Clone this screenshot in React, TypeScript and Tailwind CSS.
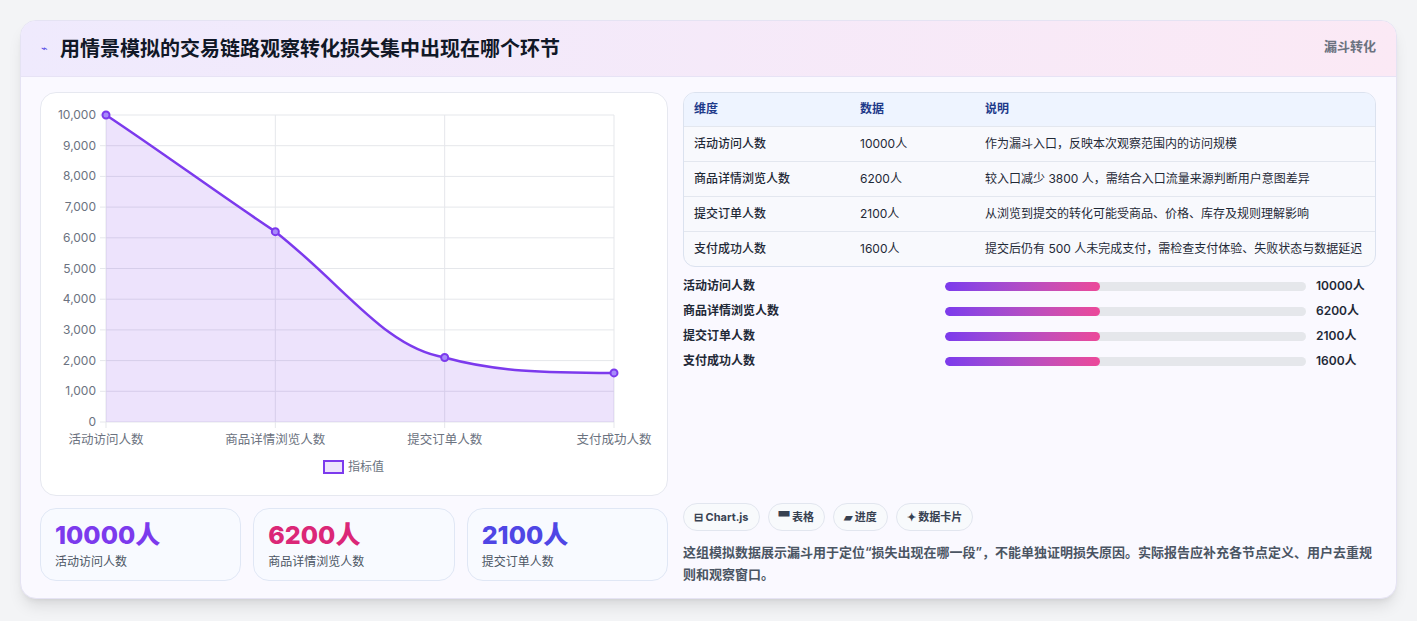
import React from 'react';

const rows = [
  { name: '活动访问人数', value: 10000, note: '作为漏斗入口，反映本次观察范围内的访问规模' },
  { name: '商品详情浏览人数', value: 6200, note: '较入口减少 3800 人，需结合入口流量来源判断用户意图差异' },
  { name: '提交订单人数', value: 2100, note: '从浏览到提交的转化可能受商品、价格、库存及规则理解影响' },
  { name: '支付成功人数', value: 1600, note: '提交后仍有 500 人未完成支付，需检查支付体验、失败状态与数据延迟' },
];

const font = { fontFamily: 'Inter, "Noto Sans CJK SC", sans-serif' };

function Chart() {
  // plot area in svg coords (card origin at 40,93)
  const L = 65, R = 573, T = 22, B = 329;
  const xs = [L, L + (R - L) / 3, L + (2 * (R - L)) / 3, R];
  const y = (v: number) => B - ((B - T) * v) / 10000;
  const pts = rows.map((r, i) => [xs[i], y(r.value)]);
  const line = `M${pts[0][0]},${pts[0][1]} C${pts[0][0] + 60},${pts[0][1] + 40} ${pts[1][0] - 60},${pts[1][1] - 40} ${pts[1][0]},${pts[1][1]} C${pts[1][0] + 70},${pts[1][1] + 55} ${pts[2][0] - 60},${pts[2][1] - 10} ${pts[2][0]},${pts[2][1]} C${pts[2][0] + 50},${pts[2][1] + 14} ${pts[3][0] - 70},${pts[3][1]} ${pts[3][0]},${pts[3][1]}`;
  const ticks = Array.from({ length: 11 }, (_, i) => i * 1000);
  const labels = ['活动访问人数', '商品详情浏览人数', '提交订单人数', '支付成功人数'];
  return (
    <svg width="627" height="403" className="block" style={font}>
      {ticks.map((t) => (
        <g key={t}>
          <line x1={L - 6} x2={R} y1={y(t)} y2={y(t)} stroke="#e5e7eb" />
          <text x={L - 10} y={y(t) + 4} textAnchor="end" fontSize="12" fill="#6b7280">
            {t.toLocaleString('en-US')}
          </text>
        </g>
      ))}
      {xs.map((x, i) => (
        <g key={i}>
          <line x1={x} x2={x} y1={T} y2={B + 6} stroke="#e5e7eb" />
          <text x={x} y={B + 22} textAnchor="middle" fontSize="12.5" fill="#6b7280">{labels[i]}</text>
        </g>
      ))}
      <path d={`${line} L${R},${B} L${L},${B} Z`} fill="rgba(124,58,237,0.14)" />
      <path d={line} fill="none" stroke="#7c3aed" strokeWidth="2.5" />
      {pts.map(([px, py], i) => (
        <circle key={i} cx={px} cy={py} r="3.5" fill="#a78bfa" stroke="#7c3aed" strokeWidth="2" />
      ))}
      <rect x="283" y="368" width="19" height="12" fill="rgba(124,58,237,0.14)" stroke="#7c3aed" strokeWidth="2" />
      <text x="307" y="378" fontSize="12" fill="#6b7280">指标值</text>
    </svg>
  );
}

export default function App() {
  const kpis = [
    { v: '10000人', l: '活动访问人数', c: 'text-[#7c3aed]' },
    { v: '6200人', l: '商品详情浏览人数', c: 'text-[#db2777]' },
    { v: '2100人', l: '提交订单人数', c: 'text-[#4f46e5]' },
  ];
  return (
    <div className="w-[1417px] h-[621px] bg-[#f3f4f6] px-5 pt-5" style={font}>
      <div className="w-[1377px] h-[579px] rounded-2xl bg-[#faf9ff] border border-[#e5e3f3] shadow-lg overflow-hidden flex flex-col">
        <div className="h-[56px] flex justify-between px-5 bg-gradient-to-r from-[#efeafd] to-[#fbe9f5] border-b border-[#e7e3f5]">
          <div className="flex items-center gap-3">
            <span className="text-[11px] text-[#4f46e5]">⌁</span>
            <h1 className="text-[20px] font-bold text-[#111827]">用情景模拟的交易链路观察转化损失集中出现在哪个环节</h1>
          </div>
          <div className="pt-4 text-[13px] font-semibold text-[#6b7280]">漏斗转化</div>
        </div>
        <div className="flex gap-[15px] pl-[19px] pr-5 pt-[15px]">
          <div className="w-[628px] flex flex-col gap-3">
            <div className="h-[404px] bg-white rounded-2xl border border-[#e6e8f0]">
              <Chart />
            </div>
            <div className="grid grid-cols-3 gap-3">
              {kpis.map((k) => (
                <div key={k.l} className="h-[73px] rounded-2xl border border-[#e0e7f5] bg-[#f8faff] px-3.5 pt-2.5">
                  <div className={`text-[25px] font-extrabold leading-8 ${k.c}`}>{k.v}</div>
                  <div className="text-[12px] text-[#4b5563] mt-0.5">{k.l}</div>
                </div>
              ))}
            </div>
          </div>
          <div className="flex-1 flex flex-col">
            <div className="rounded-xl border border-[#dbe2ef] overflow-hidden bg-[#f8f9fd]">
              <table className="w-full text-[12px] text-[#1f2937]">
                <thead>
                  <tr className="bg-[#eef4ff] text-[#1e3a8a] h-[33px] text-left">
                    <th className="font-semibold pl-2.5 w-[176px]">维度</th>
                    <th className="font-semibold w-[125px]">数据</th>
                    <th className="font-semibold">说明</th>
                  </tr>
                </thead>
                <tbody>
                  {rows.map((r) => (
                    <tr key={r.name} className="h-[35px] border-t border-[#e3e7ef]">
                      <td className="pl-2.5 font-medium">{r.name}</td>
                      <td>{r.value}人</td>
                      <td>{r.note}</td>
                    </tr>
                  ))}
                </tbody>
              </table>
            </div>
            <div className="flex flex-col gap-[7px] mt-2.5">
              {rows.map((r) => (
                <div key={r.name} className="flex items-center h-[18px] text-[12px] font-semibold text-[#1f2937]">
                  <div className="w-[262px]">{r.name}</div>
                  <div className="w-[361px] h-[9px] rounded-full bg-[#e5e7eb] overflow-hidden">
                    <div className="h-full w-[43%] rounded-full bg-gradient-to-r from-[#7c3aed] to-[#ec4899]" />
                  </div>
                  <div className="ml-2.5">{r.value}人</div>
                </div>
              ))}
            </div>
            <div className="flex gap-2 mt-[133px]">
              {['⊟ Chart.js', '▀ 表格', '▰ 进度', '✦ 数据卡片'].map((t) => (
                <span key={t} className="h-[28px] px-2.5 flex items-center rounded-full border border-[#e2e6ef] bg-[#f8fafc] text-[11px] font-bold text-[#374151]">{t}</span>
              ))}
            </div>
            <p className="mt-2.5 text-[13px] leading-[22px] font-semibold text-[#4b5563]">
              这组模拟数据展示漏斗用于定位“损失出现在哪一段”，不能单独证明损失原因。实际报告应补充各节点定义、用户去重规则和观察窗口。
            </p>
          </div>
        </div>
      </div>
    </div>
  );
}
